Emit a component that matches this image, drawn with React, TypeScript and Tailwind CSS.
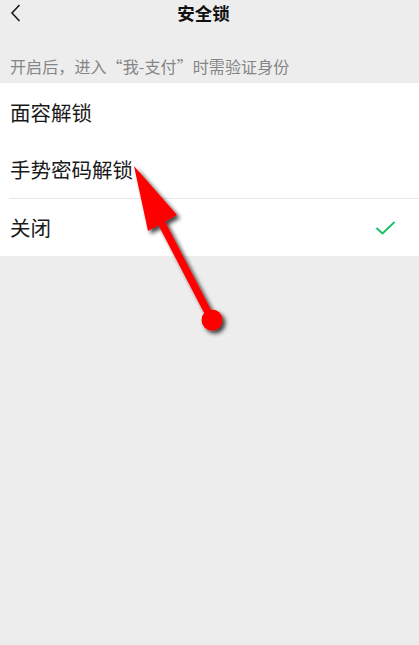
import React from "react";

const font = { fontFamily: '"Noto Sans CJK SC", "Noto Sans", sans-serif' };

export default function App() {
  return (
    <div className="relative w-full h-[645px] bg-[#ededed] overflow-hidden" style={font}>
      {/* header */}
      <div className="relative h-[26px] flex items-center justify-center">
        <svg className="absolute left-[10px] top-[4px]" width="12" height="18" viewBox="0 0 12 18">
          <path d="M9.5 1 L2 9 L9.5 17" fill="none" stroke="#1a1a1a" strokeWidth="1.6" />
        </svg>
        <span className="text-[17.5px] font-bold text-[#111] leading-none mr-[12px]">安全锁</span>
      </div>
      {/* subtitle */}
      <div className="h-[57px] flex items-end pb-[9px] px-[10px]">
        <span className="text-[16px] text-[#858585] leading-none tracking-[0.1px]">开启后，进入“我-支付”时需验证身份</span>
      </div>
      {/* list */}
      <div className="bg-white">
        <div className="h-[58px] flex items-center px-[10px]">
          <span className="text-[20.5px] text-[#1a1a1a] leading-none">面容解锁</span>
        </div>
        <div className="h-[57px] flex items-center px-[10px]">
          <span className="text-[20.5px] text-[#1a1a1a] leading-none">手势密码解锁</span>
        </div>
        <div className="ml-[9px] h-px bg-[#e8e8e8]" />
        <div className="h-[57px] flex items-center justify-between pl-[10px] pr-[22px]">
          <span className="text-[20.5px] text-[#1a1a1a] leading-none">关闭</span>
          <svg width="22" height="16" viewBox="0 0 22 16">
            <path d="M1.5 8 L7.5 13.5 L19.5 2" fill="none" stroke="#15c064" strokeWidth="1.8" />
          </svg>
        </div>
      </div>
      {/* arrow overlay */}
      <svg className="absolute inset-0 pointer-events-none" width="419" height="645" viewBox="0 0 419 645">
        <defs>
          <filter id="sh" x="-20%" y="-20%" width="140%" height="140%">
            <feDropShadow dx="3" dy="3" stdDeviation="2.2" floodColor="#000" floodOpacity="0.75" />
          </filter>
        </defs>
        <g filter="url(#sh)">
          <line x1="160" y1="220" x2="212" y2="320" stroke="#ff0000" strokeWidth="7.5" />
          <polygon points="134,166 177,215 148,231" fill="#ff0000" />
          <circle cx="212" cy="320" r="10.5" fill="#ff0000" />
        </g>
      </svg>
    </div>
  );
}
